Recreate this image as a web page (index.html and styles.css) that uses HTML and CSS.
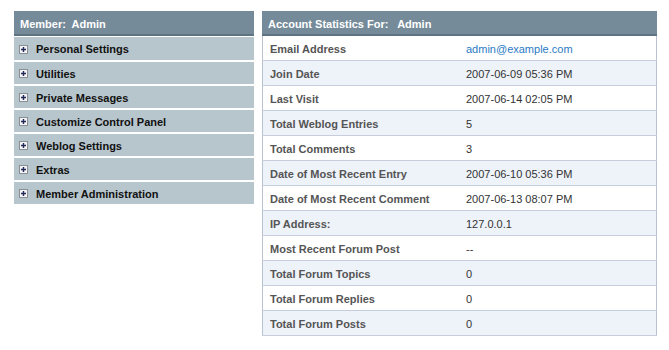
FILE: index.html
```html
<!DOCTYPE html>
<html lang="en">
<head>
    <meta charset="UTF-8">
    <title>Control Panel</title>
    <link rel="stylesheet" href="styles.css">
</head>
<body>
    <div class="layout">
        <div class="menu">
            <div class="panel-head">Member:&nbsp; Admin</div>
            <ul class="menu-list">
                <li><span class="plus"><svg width="9" height="9" viewBox="0 0 9 9"><rect x="0.5" y="0.5" width="8" height="8" fill="#f4f4f4" stroke="#8a8f96"/><path d="M2 4.5h5M4.5 2v5" stroke="#1f2a5a" stroke-width="1.4"/></svg></span>Personal Settings</li>
                <li><span class="plus"><svg width="9" height="9" viewBox="0 0 9 9"><rect x="0.5" y="0.5" width="8" height="8" fill="#f4f4f4" stroke="#8a8f96"/><path d="M2 4.5h5M4.5 2v5" stroke="#1f2a5a" stroke-width="1.4"/></svg></span>Utilities</li>
                <li><span class="plus"><svg width="9" height="9" viewBox="0 0 9 9"><rect x="0.5" y="0.5" width="8" height="8" fill="#f4f4f4" stroke="#8a8f96"/><path d="M2 4.5h5M4.5 2v5" stroke="#1f2a5a" stroke-width="1.4"/></svg></span>Private Messages</li>
                <li><span class="plus"><svg width="9" height="9" viewBox="0 0 9 9"><rect x="0.5" y="0.5" width="8" height="8" fill="#f4f4f4" stroke="#8a8f96"/><path d="M2 4.5h5M4.5 2v5" stroke="#1f2a5a" stroke-width="1.4"/></svg></span>Customize Control Panel</li>
                <li><span class="plus"><svg width="9" height="9" viewBox="0 0 9 9"><rect x="0.5" y="0.5" width="8" height="8" fill="#f4f4f4" stroke="#8a8f96"/><path d="M2 4.5h5M4.5 2v5" stroke="#1f2a5a" stroke-width="1.4"/></svg></span>Weblog Settings</li>
                <li><span class="plus"><svg width="9" height="9" viewBox="0 0 9 9"><rect x="0.5" y="0.5" width="8" height="8" fill="#f4f4f4" stroke="#8a8f96"/><path d="M2 4.5h5M4.5 2v5" stroke="#1f2a5a" stroke-width="1.4"/></svg></span>Extras</li>
                <li><span class="plus"><svg width="9" height="9" viewBox="0 0 9 9"><rect x="0.5" y="0.5" width="8" height="8" fill="#f4f4f4" stroke="#8a8f96"/><path d="M2 4.5h5M4.5 2v5" stroke="#1f2a5a" stroke-width="1.4"/></svg></span>Member Administration</li>
            </ul>
        </div>

        <div class="stats">
            <div class="panel-head">Account Statistics For:&nbsp;&nbsp; Admin</div>
            <table class="stats-table">
                <tr><td class="label">Email Address</td><td><a href="#">admin@example.com</a></td></tr>
                <tr class="alt"><td class="label">Join Date</td><td>2007-06-09 05:36 PM</td></tr>
                <tr><td class="label">Last Visit</td><td>2007-06-14 02:05 PM</td></tr>
                <tr class="alt"><td class="label">Total Weblog Entries</td><td>5</td></tr>
                <tr><td class="label">Total Comments</td><td>3</td></tr>
                <tr class="alt"><td class="label">Date of Most Recent Entry</td><td>2007-06-10 05:36 PM</td></tr>
                <tr><td class="label">Date of Most Recent Comment</td><td>2007-06-13 08:07 PM</td></tr>
                <tr class="alt"><td class="label">IP Address:</td><td>127.0.0.1</td></tr>
                <tr><td class="label">Most Recent Forum Post</td><td>--</td></tr>
                <tr class="alt"><td class="label">Total Forum Topics</td><td>0</td></tr>
                <tr><td class="label">Total Forum Replies</td><td>0</td></tr>
                <tr class="alt"><td class="label">Total Forum Posts</td><td>0</td></tr>
            </table>
        </div>
    </div>
</body>
</html>
```

FILE: styles.css
```css
body {
    margin: 0;
    padding: 11px 12px 0 14px;
    font-family: "Liberation Sans", Arial, sans-serif;
    font-size: 11px;
    background-color: #fff;
    color: #333;
}
.layout {
    display: flex;
    align-items: flex-start;
    gap: 8px;
}
.menu {
    width: 240px;
}
.stats {
    flex: 1;
}
.panel-head {
    height: 23px;
    line-height: 26px;
    padding-left: 6px;
    background-color: #768b9a;
    border-bottom: 2px solid #5f7482;
    color: #fff;
    font-weight: bold;
}
.menu-list {
    list-style: none;
    margin: 0;
    padding: 0;
}
.menu-list li {
    display: flex;
    align-items: center;
    height: 22px;
    margin-top: 2px;
    padding-left: 5px;
    padding-top: 1px;
    box-sizing: border-box;
    background-color: #b7c5cd;
    color: #111;
    font-weight: bold;
}
.menu-list li:first-child {
    margin-top: 1px;
    height: 23px;
}
.plus {
    display: flex;
    width: 17px;
}
.stats-table {
    width: 100%;
    table-layout: fixed;
    border-collapse: collapse;
    border: 1px solid #b9c1d1;
    border-top: none;
}
.stats-table td {
    height: 22px;
    padding: 2px 7px 0;
    border-bottom: 1px solid #c6cddb;
    color: #333;
}
.stats-table td.label {
    width: 182px;
    color: #555;
    font-weight: bold;
}
.stats-table tr.alt td {
    background-color: #eef2f9;
}
.stats-table a {
    color: #2b7bc4;
    text-decoration: none;
}
```
